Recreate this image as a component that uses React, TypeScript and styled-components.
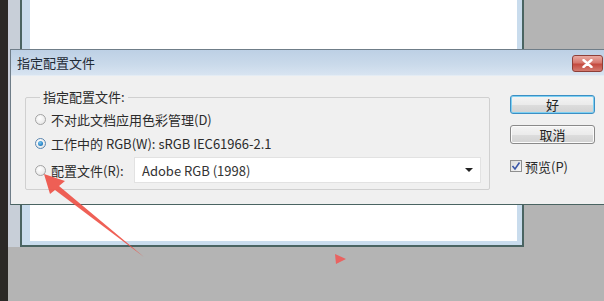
import styled, { createGlobalStyle } from "styled-components"

const GlobalStyle = createGlobalStyle`
  html, body {
    margin: 0;
    padding: 0;
    background: #b4b4b4;
  }
  * {
    box-sizing: border-box;
  }
`

const FONT = `"Noto Sans CJK SC", "Noto Sans", sans-serif`

const Screen = styled.div`
  position: relative;
  width: 604px;
  height: 301px;
  overflow: hidden;
  display: flex;
  flex-direction: row;
  background: #b4b4b4;
  font-family: ${FONT};
`

const LeftStrip = styled.div`
  width: 8px;
  flex: none;
  background: #2b2926;
`

const Canvas = styled.div`
  flex: 1;
  display: flex;
  align-items: flex-start;
`

const DocWindow = styled.div`
  width: 516px;
  height: 247px;
  padding-left: 12px;
  background: #c8cfd8;
  display: flex;
`

const DocFrame = styled.div`
  flex: 1;
  display: flex;
  border-left: 2px solid #4a6462;
  border-right: 2px solid #4a6462;
  border-bottom: 2px solid #4a6462;
  background: #c9dced;
  padding: 0 5px 4px 8px;
`

const Paper = styled.div`
  flex: 1;
  background: #ffffff;
`

const Dialog = styled.div`
  position: absolute;
  left: 10px;
  top: 49px;
  width: 600px;
  height: 156px;
  border: 1px solid #6f7d88;
  border-bottom-color: #4a6462;
  background: #f0f0f0;
  display: flex;
  flex-direction: column;
`

const TitleBar = styled.div`
  height: 26px;
  flex: none;
  display: flex;
  align-items: center;
  padding: 0 6px 0 6px;
  background: linear-gradient(180deg, #bdd0e5 0%, #c9d9ea 55%, #d8e4f1 100%);
  border-bottom: 1px solid #e4ecf4;
`

const TitleText = styled.span`
  font-size: 13px;
  color: #1f2a36;
  line-height: 16px;
`

const CloseButton = styled.div`
  margin-left: auto;
  align-self: flex-start;
  margin-top: 5px;
  width: 31px;
  height: 17px;
  border: 1px solid #8e3f38;
  border-radius: 3px;
  background: linear-gradient(180deg, #e9aaa2 0%, #d7786e 45%, #c44a3f 55%, #d47b70 100%);
  display: flex;
  align-items: center;
  justify-content: center;
`

const Body = styled.div`
  flex: 1;
  display: flex;
  flex-direction: row;
  align-items: flex-start;
  padding: 13px 0 0 14px;
  gap: 20px;
`

const GroupBox = styled.fieldset`
  margin: 0;
  width: 465px;
  border: 1px solid #d0d0d0;
  border-radius: 2px;
  padding: 4px 8px 6px 9px;
  display: flex;
  flex-direction: column;
  gap: 4px;
`

const GroupLabel = styled.legend`
  font-size: 13px;
  line-height: 16px;
  color: #2b2b2b;
  padding: 0 3px;
  margin-left: 5px;
`

const OptionRow = styled.label<{ $tall?: boolean }>`
  display: flex;
  align-items: center;
  height: ${(p) => (p.$tall ? 26 : 20)}px;
  gap: 5px;
  font-size: 13px;
  color: #2b2b2b;
  white-space: nowrap;
`

const Radio = styled.span<{ $checked?: boolean }>`
  width: 11px;
  height: 11px;
  flex: none;
  border-radius: 50%;
  border: 1px solid ${(p) => (p.$checked ? "#5a86b0" : "#a3a3a3")};
  background: radial-gradient(circle at 40% 35%, #ffffff 0%, #eaeaea 70%, #d8d8d8 100%);
  display: flex;
  align-items: center;
  justify-content: center;
  &::after {
    content: "";
    display: ${(p) => (p.$checked ? "block" : "none")};
    width: 5px;
    height: 5px;
    border-radius: 50%;
    background: radial-gradient(circle at 40% 35%, #7cc8f2 0%, #2a86c8 60%, #1a5f99 100%);
  }
`

const Combo = styled.div`
  margin-left: auto;
  width: 347px;
  height: 26px;
  background: #ffffff;
  border: 1px solid #e2e2e2;
  display: flex;
  align-items: center;
  padding: 0 7px 0 7px;
  font-size: 13px;
  color: #333333;
`

const ComboArrow = styled.span`
  margin-left: auto;
  width: 0;
  height: 0;
  border-left: 4px solid transparent;
  border-right: 4px solid transparent;
  border-top: 4px solid #222222;
`

const SideColumn = styled.div`
  width: 85px;
  display: flex;
  flex-direction: column;
`

const DialogButton = styled.div<{ $default?: boolean }>`
  height: 19px;
  margin-top: ${(p) => (p.$default ? 6 : 11)}px;
  border: 1px solid ${(p) => (p.$default ? "#3c8fc4" : "#8a8a8a")};
  border-radius: 3px;
  box-shadow: ${(p) => (p.$default ? "inset 0 0 0 1px #7ed0f2" : "inset 0 0 0 1px #fbfbfb")};
  background: linear-gradient(180deg, #f4f4f4 0%, #ebebeb 50%, #dddddd 51%, #d2d2d2 100%);
  display: flex;
  align-items: center;
  justify-content: center;
  font-size: 13px;
  color: #222222;
`

const CheckRow = styled.label`
  margin-top: 14px;
  height: 16px;
  display: flex;
  align-items: center;
  gap: 3px;
  font-size: 13px;
  color: #2b2b2b;
`

const CheckBox = styled.span`
  width: 12px;
  height: 12px;
  border: 1px solid #8f8f8f;
  background: linear-gradient(135deg, #dcdcdc 0%, #f6f6f6 100%);
  display: flex;
  align-items: center;
  justify-content: center;
`

const Overlay = styled.svg`
  position: absolute;
  left: 0;
  top: 0;
  pointer-events: none;
`

export default function App() {
  return (
    <>
      <GlobalStyle />
      <Screen>
        <LeftStrip />
        <Canvas>
          <DocWindow>
            <DocFrame>
              <Paper />
            </DocFrame>
          </DocWindow>
        </Canvas>

        <Dialog>
          <TitleBar>
            <TitleText>指定配置文件</TitleText>
            <CloseButton>
              <svg width="11" height="9" viewBox="0 0 11 9">
                <path d="M1.5 1 L9.5 8 M9.5 1 L1.5 8" stroke="#ffffff" strokeWidth="2.4" strokeLinecap="round" />
              </svg>
            </CloseButton>
          </TitleBar>
          <Body>
            <GroupBox>
              <GroupLabel>指定配置文件:</GroupLabel>
              <OptionRow>
                <Radio />
                不对此文档应用色彩管理(D)
              </OptionRow>
              <OptionRow>
                <Radio $checked />
                工作中的 RGB(W): sRGB IEC61966-2.1
              </OptionRow>
              <OptionRow $tall>
                <Radio />
                配置文件(R):
                <Combo>
                  Adobe RGB (1998)
                  <ComboArrow />
                </Combo>
              </OptionRow>
            </GroupBox>
            <SideColumn>
              <DialogButton $default>好</DialogButton>
              <DialogButton>取消</DialogButton>
              <CheckRow>
                <CheckBox>
                  <svg width="10" height="10" viewBox="0 0 10 10">
                    <path d="M1.5 5 L4 8 L8.5 1.5" stroke="#3a56a8" strokeWidth="1.6" fill="none" />
                  </svg>
                </CheckBox>
                预览(P)
              </CheckRow>
            </SideColumn>
          </Body>
        </Dialog>

        <Overlay width="604" height="301" viewBox="0 0 604 301">
          <polygon
            points="44,174 65,181 59,186 144,257 55,190 50,194"
            fill="#ee5248"
            opacity="0.92"
          />
          <polygon points="335,254 346,259 336,264" fill="#ee5a58" opacity="0.9" />
        </Overlay>
      </Screen>
    </>
  )
}
